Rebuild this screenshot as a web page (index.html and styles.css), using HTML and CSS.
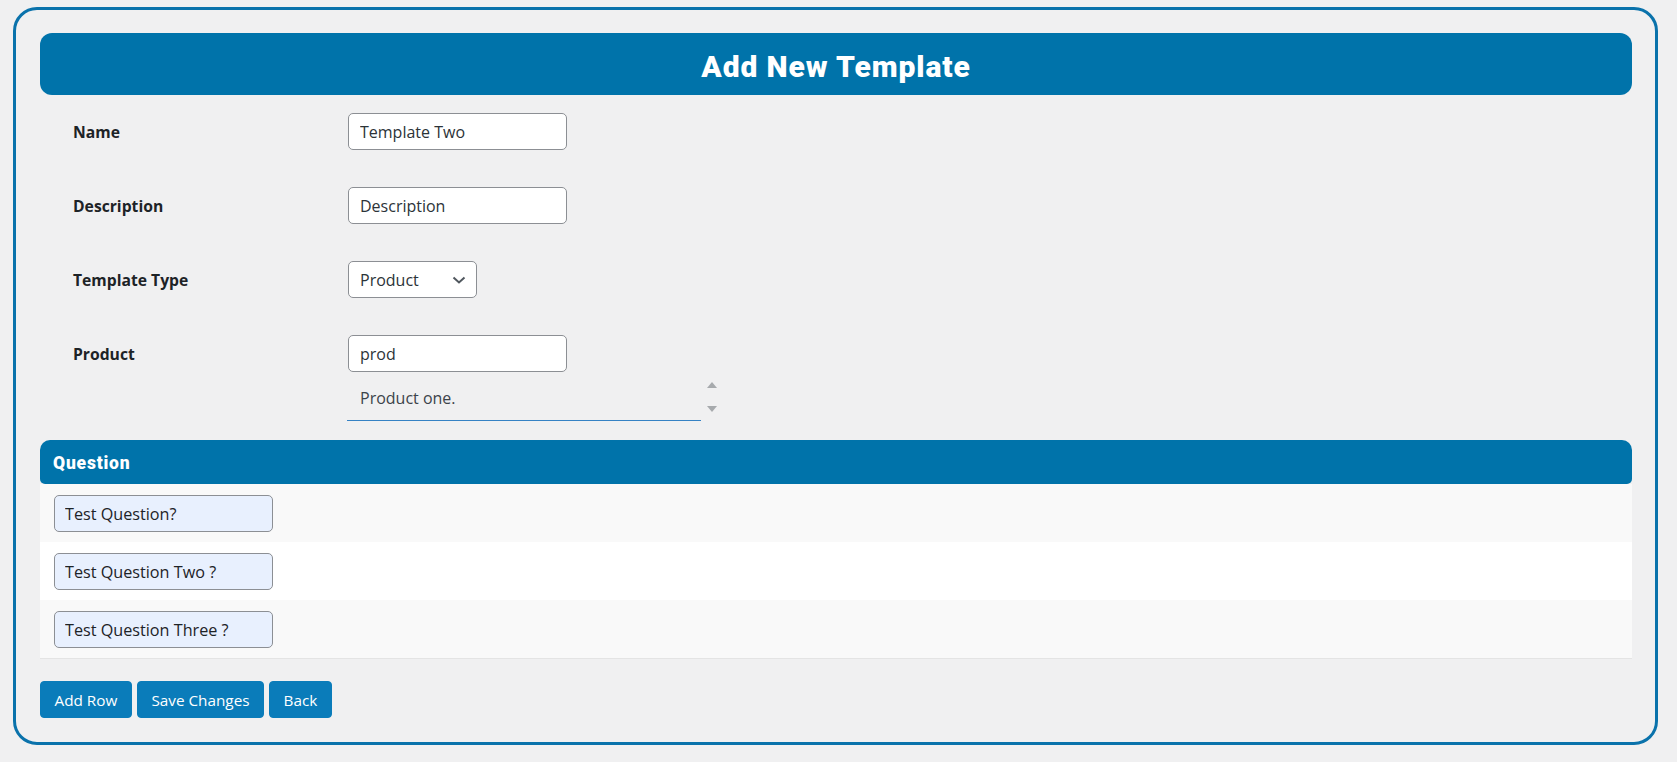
FILE: index.html
```html
<!DOCTYPE html>
<html lang="en">
<head>
<meta charset="utf-8">
<title>Add New Template</title>
<link rel="stylesheet" href="styles.css">
</head>
<body>
<div class="wrap">
  <div class="page-header"><h1 class="page-title">Add New Template</h1></div>

  <div class="form">
    <div class="form-row">
      <label class="form-label">Name</label>
      <div class="form-field"><input class="text-input" type="text" value="Template Two"></div>
    </div>
    <div class="form-row">
      <label class="form-label">Description</label>
      <div class="form-field"><input class="text-input" type="text" value="Description"></div>
    </div>
    <div class="form-row">
      <label class="form-label">Template Type</label>
      <div class="form-field">
        <div class="select-box">
          <span class="select-value">Product</span>
          <svg class="chevron" width="14" height="8" viewBox="0 0 14 8"><path d="M1.5 1.5 L7 6.5 L12.5 1.5" fill="none" stroke="#50575e" stroke-width="2"/></svg>
        </div>
      </div>
    </div>
    <div class="form-row">
      <label class="form-label">Product</label>
      <div class="form-field">
        <input class="text-input" type="text" value="prod">
        <div class="suggest">
          <div class="suggest-list"><span class="suggest-item">Product one.</span></div>
          <div class="spinner">
            <svg width="10" height="6" viewBox="0 0 10 6"><path d="M0 6 L5 0 L10 6 Z" fill="#a7aaad"/></svg>
            <svg width="10" height="6" viewBox="0 0 10 6"><path d="M0 0 L10 0 L5 6 Z" fill="#a7aaad"/></svg>
          </div>
        </div>
      </div>
    </div>
  </div>

  <div class="questions">
    <div class="questions-head">Question</div>
    <div class="q-row odd"><input class="q-input" type="text" value="Test Question?"></div>
    <div class="q-row even"><input class="q-input" type="text" value="Test Question Two ?"></div>
    <div class="q-row odd"><input class="q-input" type="text" value="Test Question Three ?"></div>
  </div>

  <div class="actions">
    <button class="btn" type="button">Add Row</button>
    <button class="btn" type="button">Save Changes</button>
    <button class="btn" type="button">Back</button>
  </div>
</div>
</body>
</html>
```

FILE: styles.css
```css
* { box-sizing: border-box; }

html, body {
  margin: 0;
  padding: 0;
  background: #f0f0f1;
  font-family: "Open Sans", "Noto Sans", "Liberation Sans", sans-serif;
  color: #1d2327;
}

.wrap {
  margin: 7px 19px 0 13px;
  height: 738px;
  border: 3px solid #0a72ab;
  border-radius: 24px;
  padding: 23px 23px 24px 24px;
  display: flex;
  flex-direction: column;
}

.page-header {
  height: 63px;
  background: #0073aa;
  border-radius: 12px;
  display: flex;
  align-items: center;
  justify-content: center;
  padding-top: 5px;
}

.page-title {
  margin: 0;
  color: #fff;
  font-family: "Roboto", "Inter", sans-serif;
  font-weight: 900;
  font-size: 30px;
  line-height: 1;
  letter-spacing: 0.9px;
}

.form {
  padding-left: 33px;
}

.form-row {
  display: flex;
  align-items: baseline;
  padding: 18px 0 19px;
}

.form-label {
  width: 275px;
  flex: none;
  font-weight: 700;
  font-size: 15.7px;
  color: #1d2327;
}

.form-field {
  display: flex;
  flex-direction: column;
}

.text-input {
  width: 219px;
  height: 37px;
  margin: 0;
  padding: 0 11px;
  border: 1px solid #8c8f94;
  border-radius: 5px;
  background: #fff;
  font-family: inherit;
  font-size: 16px;
  color: #2c3338;
  outline: none;
}

.select-box {
  width: 129px;
  height: 37px;
  padding: 0 10px 0 11px;
  border: 1px solid #8c8f94;
  border-radius: 5px;
  background: #fff;
  display: flex;
  align-items: center;
  justify-content: space-between;
  font-size: 16px;
  color: #2c3338;
}

.chevron { flex: none; margin-top: 1px; }

.suggest {
  display: flex;
  align-items: center;
  margin-left: -1px;
}

.suggest-list {
  width: 354px;
  height: 49px;
  border-bottom: 1px solid #3582c4;
  padding: 4px 13px 0;
  display: flex;
  align-items: center;
}

.suggest-item {
  font-size: 16px;
  color: #3c434a;
}

.spinner {
  width: 22px;
  height: 30px;
  display: flex;
  flex-direction: column;
  align-items: center;
  justify-content: space-between;
}

.questions {
  border-bottom: 1px solid #e4e4e4;
}

.questions-head {
  height: 44px;
  background: #0073aa;
  border-radius: 10px 10px 5px 5px;
  color: #fff;
  font-family: "Roboto", "Inter", sans-serif;
  font-weight: 900;
  font-size: 17.5px;
  letter-spacing: 0.8px;
  padding: 1px 13px 0;
  display: flex;
  align-items: center;
}

.q-row {
  height: 58px;
  padding: 11px 14px 10px;
}

.q-row.odd { background: #f9f9f9; }
.q-row.even { background: #ffffff; }

.q-input {
  width: 219px;
  height: 37px;
  margin: 0;
  padding: 0 10px;
  border: 1px solid #8c8f94;
  border-radius: 5px;
  background: #e8f0fe;
  font-family: inherit;
  font-size: 16.2px;
  color: #1d2327;
  outline: none;
}

.actions {
  display: flex;
  gap: 5px;
  margin-top: 22px;
}

.btn {
  height: 37px;
  padding: 0 13.5px;
  border: 1px solid #0a7cba;
  border-radius: 4px;
  background: #0a7cba;
  color: #fff;
  font-family: inherit;
  font-size: 15.3px;
}
```
